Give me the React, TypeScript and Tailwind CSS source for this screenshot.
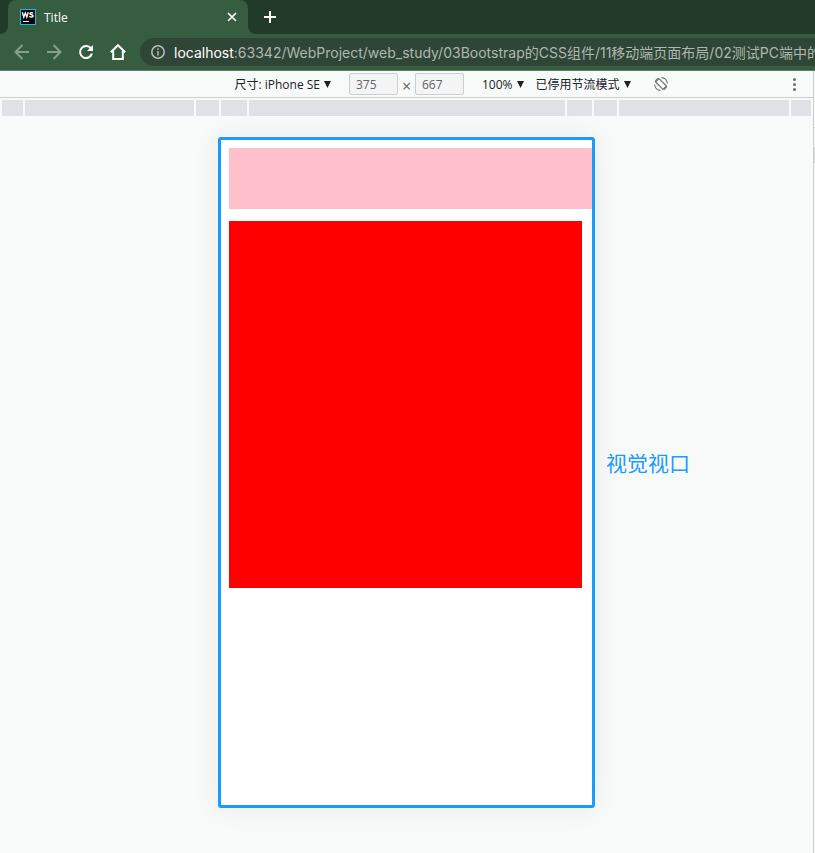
import type { ReactNode } from "react";

const segments = [
  "w-[21px]",
  "w-[169px]",
  "w-[23px]",
  "w-[26px]",
  "w-[316px]",
  "w-[25px]",
  "w-[23px]",
  "w-[170px]",
  "flex-1",
];

function Tab() {
  return (
    <div className="relative ml-2 flex h-[34px] w-[240px] items-center rounded-t-lg bg-[#365d40] pr-[10px] pl-3">
      <svg className="absolute bottom-0 -left-2 size-2" viewBox="0 0 8 8" fill="#365d40" aria-hidden="true">
        <path d="M8 0V8H0A8 8 0 0 0 8 0Z" />
      </svg>
      <svg className="absolute -right-2 bottom-0 size-2" viewBox="0 0 8 8" fill="#365d40" aria-hidden="true">
        <path d="M0 0V8H8A8 8 0 0 1 0 0Z" />
      </svg>
      <svg className="size-4" viewBox="0 0 16 16" fill="none" aria-hidden="true">
        <rect x=".5" y=".5" width="15" height="15" fill="#000" stroke="#07c3f2" />
        <path d="M2.3 3.3L3.8 8L5.3 4L6.8 8L8.3 3.3" stroke="#fff" strokeWidth="1.4" />
        <path d="M13.2 4.4C12.2 3.3 9.9 3.5 9.9 4.7C9.9 6.1 13.2 5.4 13.2 6.9C13.2 8.3 10.5 8.4 9.3 7.2" stroke="#fff" strokeWidth="1.4" />
        <path d="M3 12.5H9" stroke="#fff" />
      </svg>
      <span className="ml-2 flex-1 pt-[2px] text-[12px] font-medium text-white">Title</span>
      <button type="button" aria-label="Close tab" className="p-[1px]">
        <svg className="size-[10px]" viewBox="0 0 10 10" fill="none" stroke="#fff" strokeWidth="1.7" aria-hidden="true">
          <path d="M1 1L9 9M9 1L1 9" />
        </svg>
      </button>
    </div>
  );
}

function NavButton({ label, color, children }: { label: string; color: string; children: ReactNode }) {
  return (
    <button type="button" aria-label={label} className={color}>
      <svg className="size-4" viewBox="0 0 16 16" fill="none" stroke="currentColor" strokeWidth="2" aria-hidden="true">
        {children}
      </svg>
    </button>
  );
}

function Picker({ label, value }: { label: string; value: string }) {
  return (
    <span className="flex items-center">
      <select aria-label={label} defaultValue={value} className="appearance-none bg-transparent pt-[1px] [field-sizing:content]">
        <option>{value}</option>
      </select>
      <svg className="pointer-events-none ml-1 size-[7px]" viewBox="0 0 7 7" fill="#202124" aria-hidden="true">
        <path d="M0 0H7L3.5 7Z" />
      </svg>
    </span>
  );
}

function SizeInput({ label, value }: { label: string; value: string }) {
  return (
    <input
      aria-label={label}
      defaultValue={value}
      className="h-[22px] w-[49px] rounded-[2px] border border-[#cacdd1] bg-[#f4f4f4] px-[6px] text-[#5f6368]"
    />
  );
}

export default function App() {
  return (
    <div className="flex min-h-screen flex-col overflow-hidden bg-[#f8faf9] font-['Open_Sans','Noto_Sans_CJK_SC',sans-serif] text-[#202124]">
      <header className="bg-[#365d40]">
        <div className="flex items-center bg-[#223a29]">
          <Tab />
          <button type="button" aria-label="New tab" className="ml-4">
            <svg className="size-3" viewBox="0 0 12 12" fill="none" stroke="#fff" strokeWidth="2" aria-hidden="true">
              <path d="M6 0V12M0 6H12" />
            </svg>
          </button>
        </div>
        <div className="flex h-[37px] items-center border-b border-[#5d7c65] pl-[14px]">
          <nav className="flex gap-4">
            <NavButton label="Back" color="text-[#869e8c]">
              <path d="M15 8H2M8.5 1L1.5 8L8.5 15" />
            </NavButton>
            <NavButton label="Forward" color="text-[#869e8c]">
              <path d="M1 8H14M7.5 1L14.5 8L7.5 15" />
            </NavButton>
            <NavButton label="Reload" color="text-white">
              <path d="M13 4.6A6 6 0 1 0 13.9 9.5" />
              <path d="M15 1V7H9Z" fill="currentColor" stroke="none" />
            </NavButton>
            <NavButton label="Home" color="text-white">
              <path d="M.8 8.2L8 1.2L15.2 8.2M3.2 7V15H12.8V7" />
            </NavButton>
          </nav>
          <div className="ml-[14px] flex h-7 min-w-0 flex-1 items-center rounded-l-full bg-[#2f4636] pl-[11px]">
            <svg className="size-[14px] shrink-0" viewBox="0 0 14 14" fill="none" stroke="#b6c0b9" strokeWidth="1.5" aria-hidden="true">
              <circle cx="7" cy="7" r="6.2" />
              <path d="M7 6V10.5M7 3.3V4.8" />
            </svg>
            <div className="ml-[9px] overflow-hidden font-['Inter','Noto_Sans_CJK_SC',sans-serif] text-[14px] whitespace-nowrap text-[#adb8b0]">
              <span className="text-white">localhost</span>
              :63342/WebProject/web_study/03Bootstrap的CSS组件/11移动端页面布局/02测试PC端中的
            </div>
          </div>
        </div>
      </header>

      <div className="flex flex-1">
        <main className="flex min-w-0 flex-1 flex-col">
          <div className="grid h-[27px] grid-cols-[1fr_auto_1fr] items-center border-b border-[#cacdd1] text-[12px]">
            <div className="flex justify-end pr-[18px]">
              <Picker label="尺寸" value="尺寸: iPhone SE" />
            </div>
            <div className="flex items-center gap-1">
              <SizeInput label="宽度" value="375" />
              <span className="w-[9px] pt-1 text-center text-[16px] leading-4 text-[#5f6368]">×</span>
              <SizeInput label="高度" value="667" />
            </div>
            <div className="flex items-center pl-[18px]">
              <Picker label="缩放" value="100%" />
              <span className="ml-3">
                <Picker label="节流" value="已停用节流模式" />
              </span>
              <button type="button" aria-label="旋转" className="ml-[23px]">
                <svg className="size-[14px]" viewBox="0 0 14 14" fill="none" stroke="#6e6e6e" strokeWidth="1.1" aria-hidden="true">
                  <path d="M5 1.6L12.4 9L9 12.4L1.6 5Z" strokeLinejoin="round" />
                  <path d="M7.5 .6A6.4 6.4 0 0 1 13.4 6.5M6.5 13.4A6.4 6.4 0 0 1 .6 7.5M1.2 4.4A6.4 6.4 0 0 1 4.4 1.2M12.8 9.6A6.4 6.4 0 0 1 9.6 12.8" />
                </svg>
              </button>
              <button type="button" aria-label="更多选项" className="mr-[17px] ml-auto">
                <svg className="h-[13px] w-[3px]" viewBox="0 0 3 13" fill="#6e6e6e" aria-hidden="true">
                  <circle cx="1.5" cy="1.5" r="1.5" />
                  <circle cx="1.5" cy="6.5" r="1.5" />
                  <circle cx="1.5" cy="11.5" r="1.5" />
                </svg>
              </button>
            </div>
          </div>

          <div className="mt-[2px] flex h-4 gap-[2px] px-[2px]">
            {segments.map((width, i) => (
              <div key={i} className={`${width} bg-[#dee1e6]`} />
            ))}
          </div>

          <div className="grid flex-1 grid-cols-[1fr_auto_1fr] pt-[21px] pb-[45px]">
            <div />
            <section className="h-[671px] w-[377px] rounded-[3px] border-3 border-[#1a9cff] bg-white pt-2 pl-2 shadow-[0_0_30px_rgba(0,0,0,0.06)]">
              <div className="h-[61px] bg-[#ffc0cb]" />
              <div className="mt-3 mr-[10px] h-[367px] bg-[#ff0000]" />
            </section>
            <p className="self-center pb-5 pl-[11px] text-[21px] leading-7 text-[#1a9cff]">视觉视口</p>
          </div>
        </main>
        <aside className="w-[2px] border-l border-[#cacdd1] pt-[30px]">
          <div className="h-[27px] border-y border-[#cbd8e8]" />
          <div className="mt-[19px] h-4 bg-[#dadada]" />
        </aside>
      </div>
    </div>
  );
}
